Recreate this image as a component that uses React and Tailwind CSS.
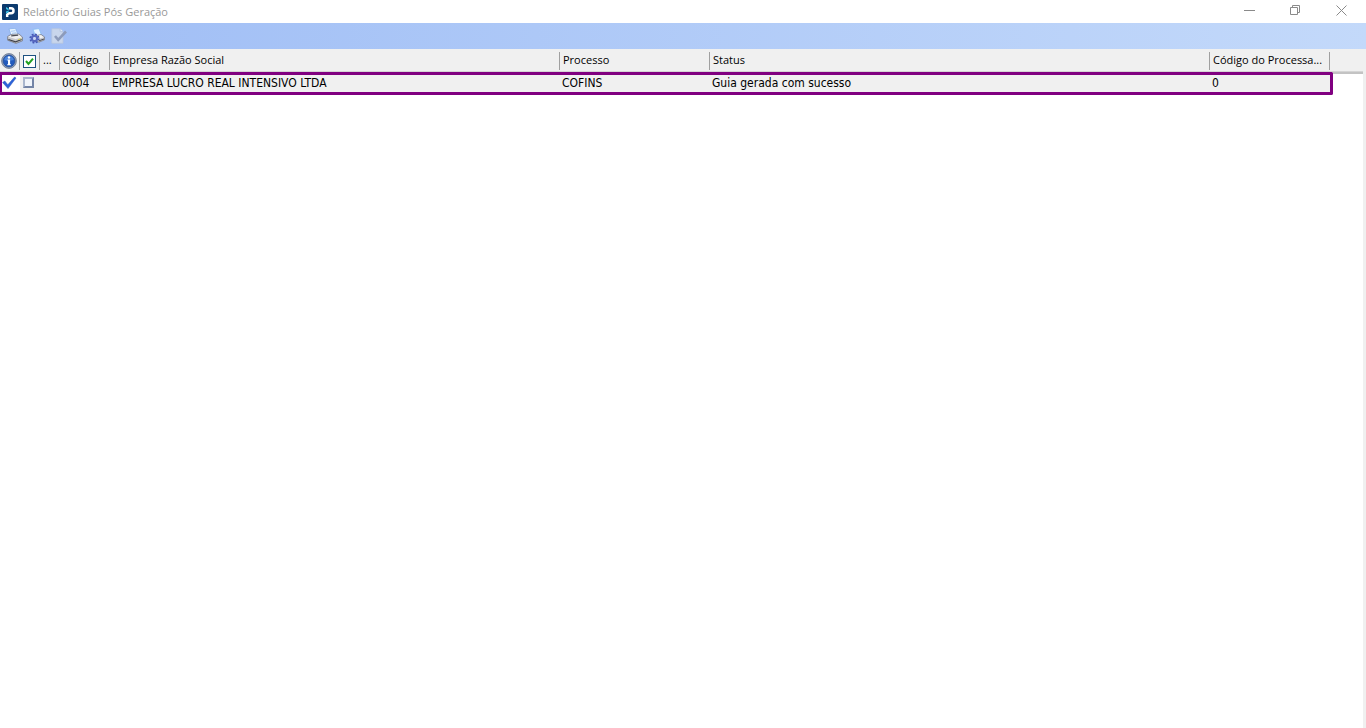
import React, { useState } from "react";

const columns = [
  { key: "code", title: "Código" },
  { key: "company", title: "Empresa Razão Social" },
  { key: "process", title: "Processo" },
  { key: "status", title: "Status" },
];

const rows = [
  {
    code: "0004",
    company: "EMPRESA LUCRO REAL INTENSIVO LTDA",
    process: "COFINS",
    status: "Guia gerada com sucesso",
    processCode: "0",
  },
];

const Logo = () => (
  <svg className="w-4 h-4" viewBox="0 0 16 16">
    <rect width="16" height="16" rx="1" fill="#0c3a6e" />
    <path d="M7 4.2h2a2.5 2.5 0 0 1 0 5H7L5.2 10.6V13" fill="none" stroke="#fff" strokeWidth="2.5" />
    <path d="M4 3l2.6 1.6v1.8L4 5z" fill="#3cc3e6" />
    <path d="M4 7.4l2.6-1v1.8L4 9.6z" fill="#3cc3e6" />
  </svg>
);

const PrinterIcon = () => (
  <svg className="w-4 h-4" viewBox="0 0 16 16">
    <path d="M2 .8 8.5.3l2.8 6.7-7 1z" fill="#e6f3ff" stroke="#86aeea" strokeWidth=".8" />
    <path d="M4 3.3l4.5-.6M5 5.3l4.4-.6" stroke="#a7cbf6" />
    <path d="M.6 8.5 4 6.5l8-.5 3.5 3.2v3.6L9 15.4.6 12.2z" fill="#c9c9cd" stroke="#70727c" strokeWidth=".7" />
    <path d="M1.2 8.7 4.3 7l7.5-.5L15 9.4 8.6 11z" fill="#f1f1f1" />
    <path d="M4.2 7.9l7-.7" stroke="#4b4d55" strokeWidth="1.2" />
    <path d="M1.4 11.4l7.2 2.4 6-2.2" fill="none" stroke="#3f4148" strokeWidth="1.1" />
    <path d="M11 11.7l3-1" stroke="#d8d458" />
  </svg>
);

const PrinterGearIcon = () => (
  <svg className="w-4 h-4" viewBox="0 0 16 16">
    <path d="M4 1.4 10 .6l2.5 6.4-6 1z" fill="#e6f3ff" stroke="#86bdf4" strokeWidth=".8" />
    <path d="M6 8l6-1.5 3.5 2.4v3L10 14.2l-4-2z" fill="#c6c6cb" stroke="#757783" strokeWidth=".7" />
    <path d="M7 8.3l5-1.2 2.8 2.1L10 10.8z" fill="#f3f3f3" />
    <path d="M10 12.8l5-1.8" stroke="#4b4d55" />
    <circle cx="5.5" cy="10.5" r="4.1" fill="none" stroke="#4657b4" strokeWidth="2" strokeDasharray="1.8 1.42" />
    <circle cx="5.5" cy="10.5" r="2.6" fill="none" stroke="#5666bf" strokeWidth="2.2" />
    <circle cx="5.5" cy="10.5" r="1.4" fill="#cad4f6" />
  </svg>
);

const PageCheckIcon = () => (
  <svg className="w-4 h-4" viewBox="0 0 16 16">
    <path d="M.8.8h8.4L12 3.6v11.6H.8z" fill="#c9d6ec" stroke="#b9c5dc" strokeWidth=".7" />
    <path d="M9.2.8v2.8H12" fill="#e5edf9" stroke="#aebcd6" strokeWidth=".7" />
    <path d="M4 8l3.2 3.8L15 3.5" fill="none" stroke="#8d9bba" strokeWidth="2.6" />
  </svg>
);

const InfoIcon = () => (
  <svg className="w-4 h-4" viewBox="0 0 16 16">
    <circle cx="8" cy="8" r="7.4" fill="#98a5bc" stroke="#65738d" strokeWidth=".8" />
    <circle cx="8" cy="8" r="5.9" fill="#235bbd" stroke="#234a91" strokeWidth=".7" />
    <path d="M3.2 7a4.9 4.9 0 0 1 9.6 0C9.8 8 6.2 8 3.2 7z" fill="#4a83da" />
    <circle cx="8" cy="4.5" r="1.2" fill="#fff" />
    <path d="M6.4 6.6h2.7v4.6h.9v1H6.2v-1H7V7.6h-.6z" fill="#fff" />
  </svg>
);

const SuccessIcon = () => (
  <svg className="w-4 h-4" viewBox="0 0 16 16">
    <path d="M.6 7.5 2.8 6l3 3.7L12.6 2l1.4 1-8 10.6z" fill="#2b62d9" stroke="#2453b8" strokeWidth=".5" />
  </svg>
);

const HeaderCell = ({ children, className = "" }) => (
  <th scope="col" className="p-0 pt-[3px] pb-[1px] border-b border-[#d5d5d5] font-normal text-left">
    <div className={`h-[18px] flex border-r border-[#a0a0a0] whitespace-nowrap ${className}`}>
      {children}
    </div>
  </th>
);

const TitleBar = () => (
  <header className="h-[23px] flex items-center justify-between bg-white">
    <div className="flex items-center gap-[5px] pl-[2px]">
      <Logo />
      <h1 className="leading-4 text-[#999999]">Relatório Guias Pós Geração</h1>
    </div>
    <div className="flex self-start h-5 pr-[2px] text-[#8a8a8a]">
      <button aria-label="Minimizar" className="w-[46px] flex items-center justify-center">
        <svg className="w-[11px] h-[11px]" viewBox="0 0 11 11">
          <path d="M0 5.5h11" stroke="currentColor" />
        </svg>
      </button>
      <button aria-label="Restaurar" className="w-[46px] flex items-center justify-center">
        <svg className="w-[11px] h-[11px]" viewBox="0 0 11 11" fill="none" stroke="currentColor">
          <path d="M.5 2.5h7v7h-7zM2.5 2.5v-2h7v7h-2" />
        </svg>
      </button>
      <button aria-label="Fechar" className="w-[46px] flex items-center justify-center">
        <svg className="w-[11px] h-[11px]" viewBox="0 0 11 11">
          <path d="M.5.5l10 10M10.5.5l-10 10" stroke="currentColor" />
        </svg>
      </button>
    </div>
  </header>
);

const Toolbar = () => (
  <div className="h-[26px] flex items-center gap-[6px] pl-[7px] bg-gradient-to-r from-[#9fbdf5] to-[#c3d9fa]">
    <button aria-label="Imprimir">
      <PrinterIcon />
    </button>
    <button aria-label="Configurar impressão">
      <PrinterGearIcon />
    </button>
    <button aria-label="Confirmar" disabled>
      <PageCheckIcon />
    </button>
  </div>
);

export default function App() {
  const [allChecked, setAllChecked] = useState(true);
  const [selected, setSelected] = useState({});

  const toggleRow = (code) => {
    setSelected((prev) => ({ ...prev, [code]: !prev[code] }));
  };

  return (
    <div className="min-h-screen flex flex-col bg-white text-[11px] text-black font-['Open_Sans','Noto_Sans',sans-serif]">
      <TitleBar />
      <Toolbar />
      <main className="flex-1 border-r-[3px] border-[#f0f0f0]">
        <table className="w-full table-fixed border-separate border-spacing-0">
          <colgroup>
            <col className="w-5" />
            <col className="w-5" />
            <col className="w-5" />
            <col className="w-[50px]" />
            <col className="w-[450px]" />
            <col className="w-[150px]" />
            <col className="w-[500px]" />
            <col className="w-[123px]" />
            <col />
          </colgroup>
          <thead className="bg-[#f0f0f0] leading-4">
            <tr>
              <HeaderCell className="pl-[1px] items-center">
                <InfoIcon />
              </HeaderCell>
              <HeaderCell className="items-center justify-center">
                <label className="relative w-[13px] h-[13px]">
                  <input
                    type="checkbox"
                    aria-label="Selecionar todos"
                    checked={allChecked}
                    onChange={() => setAllChecked(!allChecked)}
                    className="block appearance-none w-[13px] h-[13px] border border-[#1d5180] bg-white"
                  />
                  {allChecked && (
                    <svg className="absolute inset-0 w-[13px] h-[13px] pointer-events-none" viewBox="0 0 13 13">
                      <path d="M3 6l2.5 3L10 3.7" fill="none" stroke="#21a121" strokeWidth="2" />
                    </svg>
                  )}
                </label>
              </HeaderCell>
              <HeaderCell className="pl-[3px]">...</HeaderCell>
              {columns.map((column) => (
                <HeaderCell key={column.key} className="pl-[3px]">
                  {column.title}
                </HeaderCell>
              ))}
              <HeaderCell className="pl-[3px] mr-[3px]">Código do Processa...</HeaderCell>
              <td className="p-0 border-b border-[#d5d5d5]"></td>
            </tr>
          </thead>
          <tbody className="text-[12px] leading-4 font-['DejaVu_Sans_Condensed','DejaVu_Sans',sans-serif]">
            {rows.map((row) => (
              <tr
                key={row.code}
                className="[&>td]:p-0 [&>td]:h-[23px] [&>td]:align-top [&>td]:whitespace-nowrap [&>td:not(:last-child)]:bg-[#f0f0f0] [&>td:not(:last-child)]:border-y-[3px] [&>td:not(:last-child)]:border-[#800080]"
              >
                <td className="border-l-2">
                  <div className="bg-white">
                    <SuccessIcon />
                  </div>
                </td>
                <td>
                  <input
                    type="checkbox"
                    aria-label={`Selecionar ${row.company}`}
                    checked={!!selected[row.code]}
                    onChange={() => toggleRow(row.code)}
                    className="block ml-[3px] mt-[2px] appearance-none w-[11px] h-[11px] border-2 border-[#a9b6cd] border-r-[#7384a6] border-b-[#7384a6] bg-[#f0f4fa] checked:bg-[#2b62d9]"
                  />
                </td>
                <td></td>
                {columns.map((column) => (
                  <td key={column.key}>
                    <div className="pl-[2px]">{row[column.key]}</div>
                  </td>
                ))}
                <td className="border-r-[3px] rounded-r-[2px]">
                  <div className="pl-[2px]">{row.processCode}</div>
                </td>
                <td className="border-t-2 border-[#c3c3c3]"></td>
              </tr>
            ))}
          </tbody>
        </table>
      </main>
    </div>
  );
}
